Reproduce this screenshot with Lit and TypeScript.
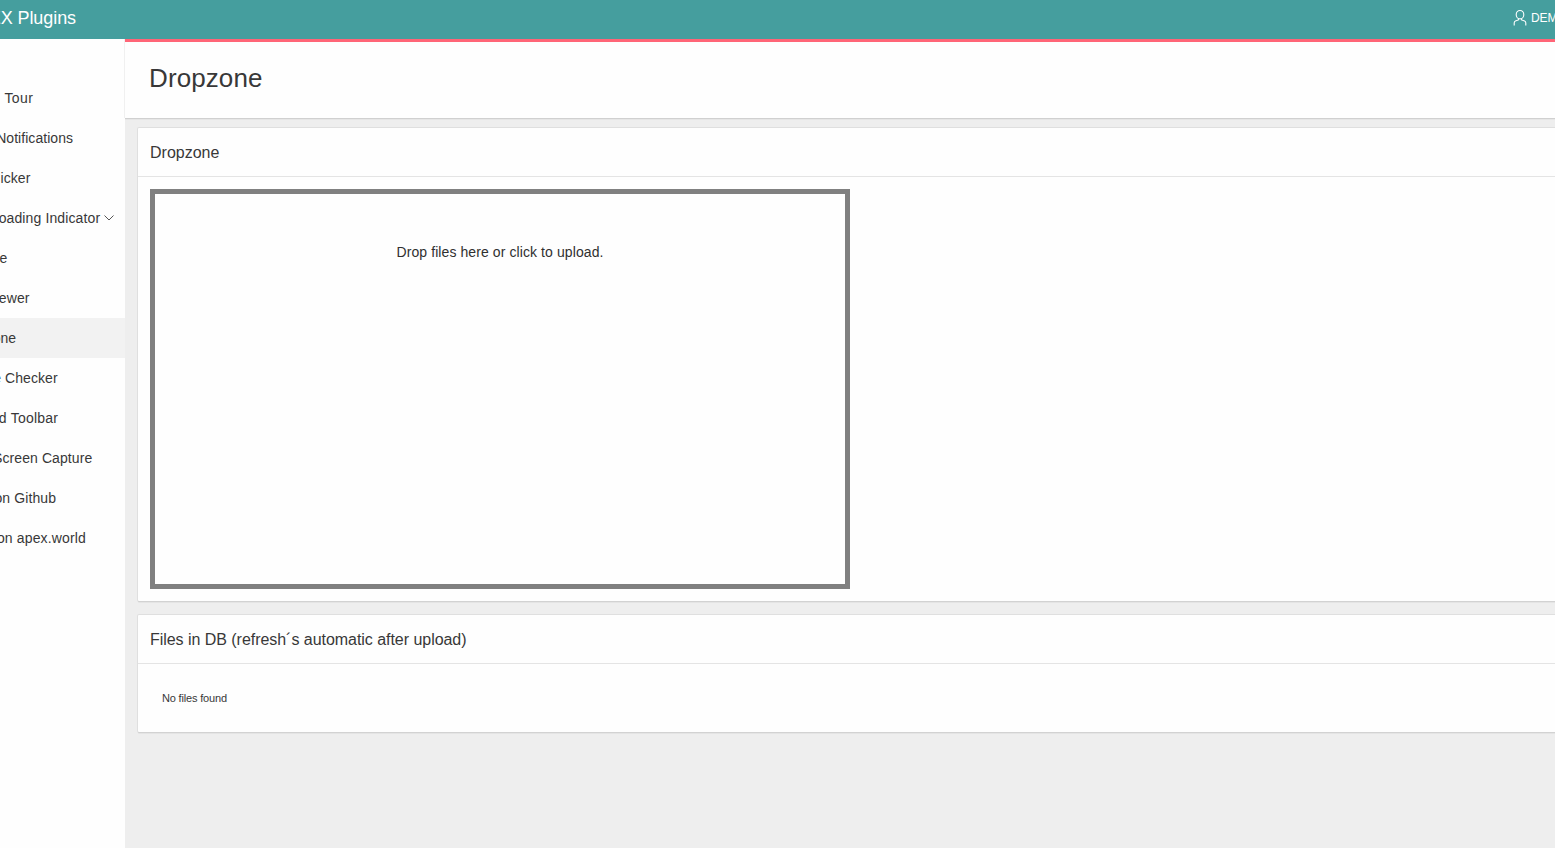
import { LitElement, html, css } from "lit";
import { customElement } from "lit/decorators.js";

interface NavItem {
  label: string;
  end: number;
  spacing: number;
  current?: boolean;
  menu?: boolean;
}

// `end` is where each label stops; longer labels run off the left edge.
const NAV: NavItem[] = [
  { label: "Tour", end: 33.3, spacing: 0.4 },
  { label: "Notifications", end: 73, spacing: 0.04 },
  { label: "icker", end: 30.4, spacing: 0.05 },
  { label: "oading Indicator", end: 100.2, spacing: 0.12, menu: true },
  { label: "e", end: 7.3, spacing: 0 },
  { label: "ewer", end: 29.6, spacing: 0.1 },
  { label: "one", end: 16, spacing: 0, current: true },
  { label: "e Checker", end: 57.7, spacing: 0.07 },
  { label: "d Toolbar", end: 58.2, spacing: 0.22 },
  { label: "Screen Capture", end: 92.3, spacing: 0.08 },
  { label: "on Github", end: 56.2, spacing: 0.12 },
  { label: "on apex.world", end: 86, spacing: 0.15 },
];

@customElement("app-root")
export class AppRoot extends LitElement {
  static styles = css`
    :host {
      display: flex;
      flex-direction: column;
      width: 100%;
      height: 100vh;
      overflow: hidden;
      background: #eeeeee;
      color: #383838;
      font-family: "Liberation Sans", Arial, sans-serif;
      font-size: 14px;
    }
    * {
      box-sizing: border-box;
    }
    .header {
      flex: none;
      height: 39px;
      display: flex;
      justify-content: space-between;
      background: #459e9e;
      color: #fff;
      overflow: hidden;
    }
    .brand {
      width: 76px;
      display: flex;
      justify-content: flex-end;
      font-size: 18px;
      line-height: 36px;
      letter-spacing: -0.08px;
      white-space: nowrap;
    }
    .user {
      width: 43px;
      display: flex;
      flex: none;
      font-size: 12px;
      line-height: 36px;
      white-space: nowrap;
      letter-spacing: -0.1px;
    }
    .user svg {
      flex: none;
      margin: 9px 3px 0 0;
    }
    .body {
      flex: 1;
      display: flex;
      min-height: 0;
    }
    .nav {
      flex: none;
      width: 125px;
      padding-top: 39px;
      background: #fefefe;
      overflow: hidden;
    }
    .item {
      height: 40px;
      line-height: 40px;
      display: flex;
    }
    .current {
      background: #f2f2f2;
    }
    .label {
      flex: none;
      display: flex;
      justify-content: flex-end;
      white-space: nowrap;
    }
    .item svg {
      margin: 16px 0 0 4px;
    }
    .main {
      flex: 1;
      min-width: 0;
    }
    .title {
      height: 79px;
      border-top: 3px solid #ff6577;
      background: #fefefe;
      padding-left: 24px;
      font-size: 26px;
      line-height: 72px;
      letter-spacing: 0.1px;
      box-shadow: 0 1px 0 #d0d0d0, 0 2px 0 #e6e6e6, -1px 0 0 #f0f0f0;
    }
    .region {
      margin: 10px -4px 0 13px;
      background: #fefefe;
      box-shadow: 0 1px 0 #d2d2d2, 0 0 0 1px #dfdfdf, 0 2px 0 #e4e4e4;
      border-radius: 1px;
    }
    .region + .region {
      margin-top: 14px;
    }
    .heading {
      height: 49px;
      border-bottom: 1px solid #e4e4e4;
      padding-left: 12px;
      font-size: 16px;
      line-height: 49px;
      white-space: nowrap;
    }
    .files {
      letter-spacing: -0.04px;
    }
    .upload {
      padding: 12px;
    }
    .drop {
      width: 700px;
      height: 400px;
      border: 5px solid #808080;
      padding-top: 50px;
      text-align: center;
      line-height: 16px;
      letter-spacing: 0.09px;
      color: #303030;
    }
    .empty {
      height: 68px;
      padding-left: 24px;
      font-size: 11px;
      line-height: 69px;
      letter-spacing: -0.17px;
    }
  `;

  render() {
    return html`
      <header class="header">
        <div class="brand"><span class="brand-text">EX Plugins</span></div>
        <div class="user">
          <svg width="16" height="18" viewBox="0 0 16 18" fill="none" stroke="#fff" stroke-width="1.1">
            <ellipse cx="8" cy="5.7" rx="3.8" ry="4.2" />
            <path d="M6.4 9.4v1.5l-3 1.2Q2.2 12.6 2.200 14v2.500M9.600 9.400v1.500l3 1.200Q13.800 12.600 13.800 14v2.500" />
          </svg>
          <span class="user-text">DEMO</span>
        </div>
      </header>
      <div class="body">
        <nav class="nav">
          ${NAV.map(
            (n) => html`<div class="item ${n.current ? "current" : ""}">
              <span class="label" style="width:${n.end}px;letter-spacing:${n.spacing}px"><span>${n.label}</span></span>
              ${n.menu
                ? html`<svg width="10" height="8" viewBox="0 0 10 8" fill="none" stroke="#555" stroke-width="1"><path d="M.5 1.500 5 6l4.500-4.500" /></svg>`
                : ""}
            </div>`
          )}
        </nav>
        <main class="main">
          <div class="title"><span>Dropzone</span></div>
          <section class="region">
            <div class="heading"><span>Dropzone</span></div>
            <div class="upload">
              <div class="drop"><span>Drop files here or click to upload.</span></div>
            </div>
          </section>
          <section class="region">
            <div class="heading files"><span>Files in DB (refresh´s automatic after upload)</span></div>
            <div class="empty"><span>No files found</span></div>
          </section>
        </main>
      </div>
    `;
  }
}
